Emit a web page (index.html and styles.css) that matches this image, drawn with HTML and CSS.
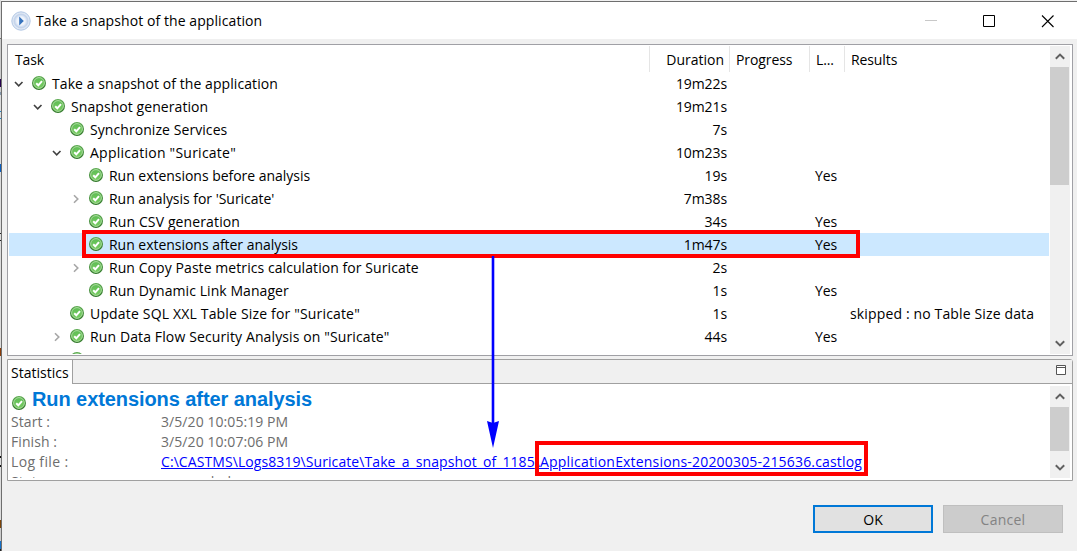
FILE: index.html
```html
<!DOCTYPE html>
<html lang="en">
<head>
<meta charset="utf-8">
<title>Take a snapshot of the application</title>
<link rel="stylesheet" href="styles.css">
</head>
<body>
<svg width="0" height="0" class="defs">
  <defs>
    <linearGradient id="rim" x1="0" y1="0" x2="0" y2="1"><stop offset="0" stop-color="#5cab50"/><stop offset="1" stop-color="#2d7426"/></linearGradient>
    <linearGradient id="disc" x1="0" y1="0" x2="0" y2="1"><stop offset="0" stop-color="#5fbd55"/><stop offset="1" stop-color="#78cc62"/></linearGradient>
    <symbol id="ok" viewBox="0 0 14 14">
      <circle cx="7" cy="7" r="7" fill="url(#rim)"/>
      <circle cx="7" cy="7" r="5.4" fill="url(#disc)" stroke="#b4e2a8" stroke-width=".9"/>
      <path d="M4.2 7.2 6.3 9.3 10 5.1" fill="none" stroke="#fff" stroke-width="2"/>
    </symbol>
    <symbol id="open" viewBox="0 0 10 10"><path d="M1 3 4.700 6.800 8.500 3" fill="none" stroke="#404040" stroke-width="1.6"/></symbol>
    <symbol id="shut" viewBox="0 0 10 10"><path d="M3 1.200 6.800 5 3 8.800" fill="none" stroke="#a6a6a6" stroke-width="1.6"/></symbol>
    <symbol id="up" viewBox="0 0 10 7"><path d="M.8 5.7 5 1.6 9.2 5.7" fill="none" stroke="#606060" stroke-width="2"/></symbol>
    <symbol id="down" viewBox="0 0 10 7"><path d="M.8 1.3 5 5.4 9.2 1.3" fill="none" stroke="#606060" stroke-width="2"/></symbol>
  </defs>
</svg>
<div class="screen">
  <div class="backdrop"></div>
  <div class="window">
    <header class="titlebar">
      <svg class="app-icon" viewBox="0 0 20 20">
        <defs><radialGradient id="ball"><stop offset="0" stop-color="#fff"/><stop offset=".6" stop-color="#edf2fa"/><stop offset="1" stop-color="#b9cdea"/></radialGradient></defs>
        <circle cx="10" cy="10" r="9.2" fill="#dde7f4" stroke="#b3c8e5" stroke-width="1"/>
        <circle cx="10" cy="10" r="7" fill="url(#ball)" stroke="#c5d3e8" stroke-width=".7"/>
        <path d="M8.2 5.5v9l4.6-4.5z" fill="#3673bd"/>
      </svg>
      <span class="title">Take a snapshot of the application</span>
      <svg class="controls" viewBox="0 0 132 14">
        <path d="M1 6.5h12" stroke="#c8c8c8"/>
        <path d="M59.5 1.5h11v11h-11z" fill="none" stroke="#000"/>
        <path d="M118 1.5l11.5 11.5M129.500 1.5 118 13" stroke="#000" stroke-width="1.1"/>
      </svg>
    </header>

    <section class="tasks">
      <div class="tree">
        <div class="head"><span>Task</span><span class="num">Duration</span><span>Progress</span><span>L...</span><span>Results</span></div>
        <div class="row"><div class="task d0"><svg class="tw"><use href="#open"/></svg><svg class="ok"><use href="#ok"/></svg><span>Take a snapshot of the application</span></div><span class="num">19m22s</span></div>
        <div class="row"><div class="task d1"><svg class="tw"><use href="#open"/></svg><svg class="ok"><use href="#ok"/></svg><span>Snapshot generation</span></div><span class="num">19m21s</span></div>
        <div class="row"><div class="task d2"><i class="tw"></i><svg class="ok"><use href="#ok"/></svg><span>Synchronize Services</span></div><span class="num">7s</span></div>
        <div class="row"><div class="task d2"><svg class="tw"><use href="#open"/></svg><svg class="ok"><use href="#ok"/></svg><span class="loose">Application "Suricate"</span></div><span class="num">10m23s</span></div>
        <div class="row"><div class="task d3"><i class="tw"></i><svg class="ok"><use href="#ok"/></svg><span class="snug">Run extensions before analysis</span></div><span class="num">19s</span><span class="log">Yes</span></div>
        <div class="row"><div class="task d3"><svg class="tw"><use href="#shut"/></svg><svg class="ok"><use href="#ok"/></svg><span class="snug">Run analysis for 'Suricate'</span></div><span class="num">7m38s</span></div>
        <div class="row"><div class="task d3"><i class="tw"></i><svg class="ok"><use href="#ok"/></svg><span class="airy">Run CSV generation</span></div><span class="num">34s</span><span class="log">Yes</span></div>
        <div class="row selected"><div class="task d3"><i class="tw"></i><svg class="ok"><use href="#ok"/></svg><span class="snug">Run extensions after analysis</span></div><span class="num">1m47s</span><span class="log">Yes</span></div>
        <div class="row"><div class="task d3"><svg class="tw"><use href="#shut"/></svg><svg class="ok"><use href="#ok"/></svg><span>Run Copy Paste metrics calculation for Suricate</span></div><span class="num">2s</span></div>
        <div class="row"><div class="task d3"><i class="tw"></i><svg class="ok"><use href="#ok"/></svg><span>Run Dynamic Link Manager</span></div><span class="num">1s</span><span class="log">Yes</span></div>
        <div class="row"><div class="task d2"><i class="tw"></i><svg class="ok"><use href="#ok"/></svg><span class="wide">Update SQL XXL Table Size for "Suricate"</span></div><span class="num">1s</span><span class="result">skipped : no Table Size data</span></div>
        <div class="row"><div class="task d2"><svg class="tw"><use href="#shut"/></svg><svg class="ok"><use href="#ok"/></svg><span class="airy">Run Data Flow Security Analysis on "Suricate"</span></div><span class="num">44s</span><span class="log">Yes</span></div>
        <div class="row"><div class="task d2"><i class="tw"></i><svg class="ok"><use href="#ok"/></svg></div></div>
      </div>
      <div class="scroll"><svg><use href="#up"/></svg><div class="thumb tall"></div><div class="fill"></div><svg><use href="#down"/></svg></div>
    </section>

    <section class="stats">
      <div class="tabs"><div class="tab">Statistics</div><div class="tabfill"><svg viewBox="0 0 10 10"><path d="M.5.5h9v9h-9zM.5 2.500h9" fill="#fff" stroke="#555"/></svg></div></div>
      <div class="pane">
        <div class="details">
          <div class="heading"><svg class="ok"><use href="#ok"/></svg><h1>Run extensions after analysis</h1></div>
          <div class="field"><span>Start :</span><span>3/5/20 10:05:19 PM</span></div>
          <div class="field"><span>Finish :</span><span>3/5/20 10:07:06 PM</span></div>
          <div class="field log-file"><span>Log file :</span><a><span class="dir">C:\CASTMS\Logs8319\Suricate\Take_a_snapshot_of_1185</span><span class="file">\ApplicationExtensions-20200305-215636.castlog</span></a></div>
          <div class="field"><span>Status :</span><span>succeeded</span></div>
        </div>
        <div class="scroll"><svg><use href="#up"/></svg><div class="thumb short"></div><div class="fill"></div><svg><use href="#down"/></svg></div>
      </div>
    </section>

    <footer class="actions"><button class="primary">OK</button><button class="disabled">Cancel</button></footer>
  </div>
  <div class="mark mark-row"></div>
  <div class="mark mark-file"></div>
  <svg class="arrow" viewBox="0 0 14 192"><path d="M7 1v170" stroke="#00f" stroke-width="2.600" stroke-linecap="round"/><path d="M1 165l6 2 6-2-6 27z" fill="#00f"/></svg>
</div>
</body>
</html>
```
FILE: styles.css
```css
* { box-sizing: border-box; }
body { margin: 0; font: 14px/23px "Open Sans", "Noto Sans", sans-serif; color: #000; }
svg { display: block; flex: none; }
.defs { position: absolute; }
.screen { position: relative; display: flex; width: 1077px; height: 551px; overflow: hidden; background: #f0f0f0; }
.backdrop {
  flex: none; width: 1px;
  background: linear-gradient(#ddd 0 38px, #777 38px 39px, #ccc 39px 79px, #26004d 79px 87px, #ccc 87px 92px, #8496aa 92px 95px, #ddd 95px 111px, #2088cc 111px 112px, #ddd 112px 118px, #2088cc 118px 119px, #ddd 119px 164px, #0a5fc0 164px 172px, #ddd 172px 233px, #222 233px 234px, #ddd 234px 240px, #222 240px 241px, #ddd 241px 348px, #8b3c08 348px 356px, #ddd 356px 456px, #111 456px 458px, #ddd 458px 465px, #111 465px 467px, #ddd 467px 520px, #7d4407 520px 528px, #ccc 528px 541px, #1470c8 541px 549px, #222 549px);
}
.window { flex: 1; display: flex; flex-direction: column; margin-top: 1px; border-top: 1px solid #6e6e6e; border-left: 1px solid #6e6e6e; }
.titlebar { display: flex; align-items: center; height: 37px; padding: 0 21px 0 9px; background: #fff; }
.app-icon { width: 20px; height: 20px; }
.title { flex: 1; margin-left: 5px; letter-spacing: .08px; }
.controls { width: 132px; height: 14px; }

.tasks { display: flex; width: 1066px; height: 312px; margin: 5px 0 0 5px; padding: 1px 2px 1px 1px; border: 1px solid #a0a0a5; background: #fff; }
.tree { width: 1041px; overflow: hidden; letter-spacing: .07px; }
.head, .row { display: grid; grid-template-columns: 641px 80px 80px 35px 205px; }
.head { height: 26px; line-height: 28px; letter-spacing: -.1px; }
.head > span { height: 26px; border-right: 1px solid #e5e5e5; padding-left: 6px; }
.head .num { padding-right: 5px; letter-spacing: 0; }
.num { text-align: right; }
.row { height: 23px; white-space: nowrap; }
.row .num { padding-right: 3px; letter-spacing: -.1px; }
.selected { background: #cce8ff; }
.task { display: flex; align-items: center; }
.d0 { padding-left: 5px; }
.d1 { padding-left: 24px; }
.d2 { padding-left: 43px; }
.d3 { padding-left: 62px; }
.tw { width: 10px; height: 10px; margin-right: 8px; }
.ok { width: 14px; height: 14px; margin-right: 6px; }
.task .ok { margin-bottom: 2px; }
.snug { letter-spacing: -.03px; }
.airy { letter-spacing: .12px; }
.wide { letter-spacing: .17px; }
.loose { letter-spacing: .24px; }
.log { grid-column: 4; padding-left: 5px; letter-spacing: -.13px; }
.result { grid-column: 5; padding-left: 5px; letter-spacing: .14px; }

.scroll { display: flex; flex-direction: column; align-items: center; flex: none; width: 20px; background: #f0f0f0; }
.scroll svg { width: 10px; height: 7px; margin: 7px 0; }
.tasks .scroll { margin-left: 1px; }
.thumb { width: 19px; align-self: flex-start; background: #cdcdcd; }
.tall { height: 118px; }
.short { height: 44px; }
.fill { flex: 1; }

.stats { width: 1066px; height: 122px; margin: 3px 0 0 5px; border: 1px solid #a0a0a0; border-radius: 0 3px 0 0; background: #fff; }
.tabs { display: flex; height: 24px; }
.tab { width: 64px; padding: 1px 0 0 3px; letter-spacing: .02px; }
.tabfill { flex: 1; display: flex; justify-content: flex-end; padding: 5px 6px; border-left: 1px solid #a0a0a0; border-bottom: 1px solid #a0a0a0; background: #f0f0f0; }
.tabfill svg { width: 10px; height: 10px; }
.pane { display: flex; height: 96px; padding: 2px 2px 2px 3px; }
.details { flex: 1; overflow: hidden; color: #6d6d6d; }
.heading { display: flex; height: 26px; }
.heading .ok { margin: 10px 6px 0 1px; }
h1 { margin: 0; font: bold 20px/27px "Liberation Sans", sans-serif; color: #0078d7; letter-spacing: -.08px; }
.field { display: grid; grid-template-columns: 150px 1fr; height: 20px; line-height: 20px; letter-spacing: .07px; white-space: nowrap; }
.log-file > :first-child { letter-spacing: .35px; }
.field a { color: #00f; text-decoration: underline; }
.dir { letter-spacing: .08px; }
.file { letter-spacing: .18px; }

.actions { display: flex; gap: 10px; justify-content: flex-end; margin-top: 24px; padding-right: 14px; }
.actions button { width: 120px; height: 28px; padding: 0; font: inherit; }
.primary { border: 2px solid #0078d7; background: #e1e1e1; color: #000; }
.disabled { border: 1px solid #bfbfbf; background: #ccc; color: #838383; }
.actions .disabled { letter-spacing: .25px; }

.mark { position: absolute; border: 4px solid #f00; }
.mark-row { left: 82px; top: 230px; width: 778px; height: 28px; }
.mark-file { left: 535px; top: 441px; width: 333px; height: 35px; }
.arrow { position: absolute; left: 486px; top: 256px; width: 14px; height: 192px; }
```
